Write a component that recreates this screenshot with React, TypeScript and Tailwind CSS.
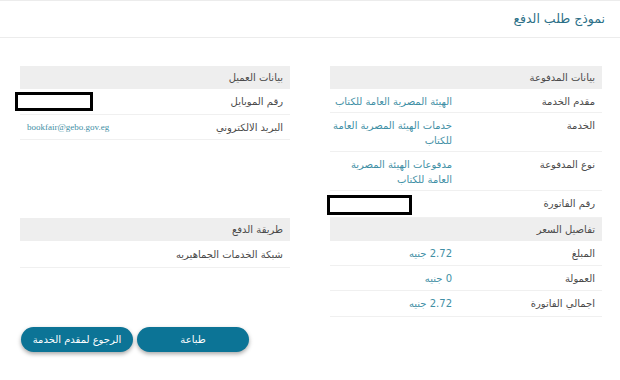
import React from "react";

const font = { fontFamily: '"DejaVu Sans", "Noto Sans", sans-serif' };

function Row({
  label,
  value,
  serif,
  redact,
  h = "min-h-[24px]",
}: {
  label: string;
  value?: React.ReactNode;
  serif?: boolean;
  redact?: string;
  h?: string;
}) {
  return (
    <div className={`relative flex border-b border-[#f0f0f0] ${h} items-start`}>
      <div className="flex-1 pr-[7px] pt-[5px] pb-[3px] text-[10px] leading-[15px] text-[#4a4a4a] whitespace-nowrap">{label}</div>
      <div
        className={`w-[129px] pl-[7px] pr-[7px] pt-[5px] pb-[3px] leading-[15px] text-[#3f8fa5] whitespace-nowrap ${serif ? "text-[9px] text-left" : "text-[10px]"}`}
        style={serif ? { fontFamily: '"Liberation Serif", "DejaVu Serif", serif' } : undefined}
      >
        {value}
      </div>
      {redact && <div className={`absolute border-[3px] border-black bg-white ${redact}`} />}
    </div>
  );
}

function Bar({ title }: { title: string }) {
  return (
    <div className="h-[23px] bg-[#eeeeee] pr-[7px] text-[10px] leading-[24px] text-[#4a4a4a]">{title}</div>
  );
}

export default function App() {
  return (
    <div dir="rtl" className="w-[620px] h-[380px] bg-white overflow-hidden" style={font}>
      <div className="border-t border-[#ececec] border-b h-[38px] flex items-center pr-[15px]">
        <div className="text-[12.5px] text-[#2b6f87] leading-[20px]">نموذج طلب الدفع</div>
      </div>
      <div className="flex pr-[18px] pl-[20px] pt-[28px] gap-[40px]">
        <div className="w-[272px]">
          <Bar title="بيانات المدفوعة" />
          <Row label="مقدم الخدمة" value="الهيئة المصرية العامة للكتاب" />
          <Row
            label="الخدمة"
            value={
              <>
                خدمات الهيئة المصرية العامة
                <br />
                للكتاب
              </>
            }
          />
          <Row
            label="نوع المدفوعة"
            value={
              <>
                مدفوعات الهيئة المصرية
                <br />
                العامة للكتاب
              </>
            }
          />
          <Row label="رقم الفاتورة" h="min-h-[27px]" redact="left-[-3px] top-[4px] w-[85px] h-[20px]" />
          <Bar title="تفاصيل السعر" />
          <Row label="المبلغ" h="min-h-[25px]" value="2.72 جنيه" />
          <Row label="العمولة" h="min-h-[25px]" value="0 جنيه" />
          <Row label="اجمالي الفاتورة" h="min-h-[26px]" value="2.72 جنيه" />
        </div>
        <div className="w-[270px]">
          <Bar title="بيانات العميل" />
          <Row label="رقم الموبايل" h="min-h-[26px]" redact="left-[-5px] top-[3px] w-[78px] h-[19px]" />
          <Row label="البريد الالكتروني" h="min-h-[25px]" value="bookfair@gebo.gov.eg" serif />
          <div className="h-[78px]" />
          <Bar title="طريقة الدفع" />
          <div className="border-b border-[#f0f0f0] pr-[7px] pt-[6px] pb-[5px] text-[10px] leading-[15px] text-[#4a4a4a]">
            شبكة الخدمات الجماهيريه
          </div>
        </div>
      </div>
      <div className="flex justify-end gap-[4px] pl-[21px] mt-[10px]">
        <button className="w-[112px] h-[25px] rounded-full bg-[#0c7496] text-white text-[10px] shadow-[0_2px_4px_rgba(0,0,0,0.35)]">
          طباعة
        </button>
        <button className="w-[112px] h-[25px] rounded-full bg-[#0c7496] text-white text-[10px] shadow-[0_2px_4px_rgba(0,0,0,0.35)]">
          الرجوع لمقدم الخدمة
        </button>
      </div>
    </div>
  );
}
